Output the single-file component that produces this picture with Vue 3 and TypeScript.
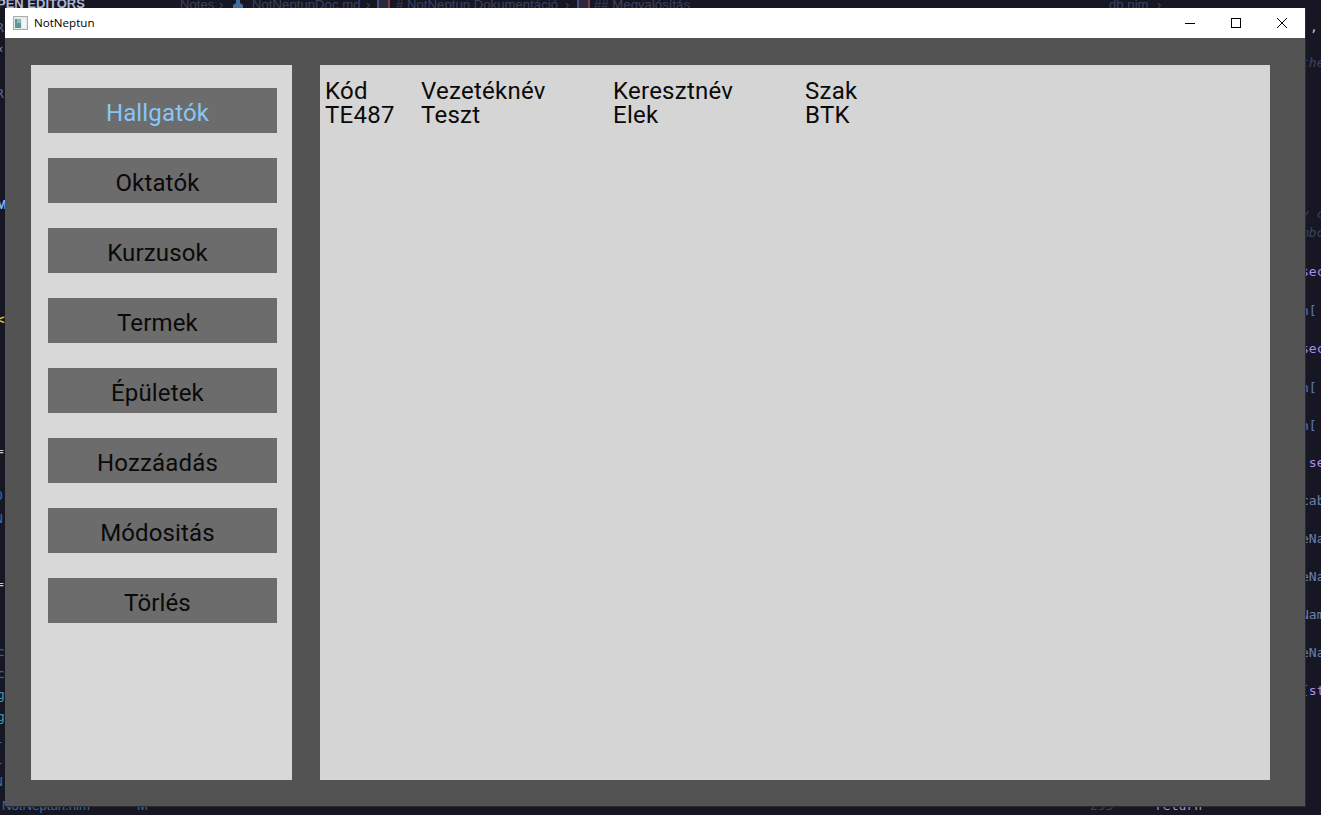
<script setup lang="ts">
interface Snip { t: string; x: number; y: number; c: string; k?: string }

const menu: string[] = ['Hallgatók', 'Oktatók', 'Kurzusok', 'Termek', 'Épületek', 'Hozzáadás', 'Módositás', 'Törlés']
const head: string[] = ['Kód', 'Vezetéknév', 'Keresztnév', 'Szak']
const row: string[] = ['TE487', 'Teszt', 'Elek', 'BTK']

const blue = '#5a78c8'
const purple = '#a98cf0'
const dim = '#3a4360'
const var1 = '#6f80a8'
const link = '#2f6db0'
const snippets: Snip[] = [
  { t: 'PEN EDITORS', x: -3, y: -5, c: '#aeb8d6', k: 'bold' },
  { t: 'Notes', x: 180, y: -4, c: dim, k: 'ui' },
  { t: '›', x: 219, y: -4, c: dim, k: 'ui' },
  { t: 'NotNeptunDoc.md', x: 252, y: -4, c: dim, k: 'ui' },
  { t: '›', x: 366, y: -4, c: dim, k: 'ui' },
  { t: '# NotNeptun Dokumentáció', x: 396, y: -4, c: dim, k: 'ui' },
  { t: '›', x: 565, y: -4, c: dim, k: 'ui' },
  { t: '## Megvalósítás', x: 594, y: -4, c: dim, k: 'ui' },
  { t: 'db.nim', x: 1109, y: -4, c: dim, k: 'ui' },
  { t: '›', x: 1157, y: -4, c: dim, k: 'ui' },
  { t: ',', x: 1310, y: 18, c: '#c8c8d8' },
  { t: 'the', x: 1301, y: 54, c: dim, k: 'italic' },
  { t: 'y c', x: 1301, y: 205, c: dim, k: 'italic' },
  { t: 'mbo', x: 1301, y: 224, c: dim, k: 'italic' },
  { t: 'sec', x: 1301, y: 263, c: purple },
  { t: 'n[', x: 1301, y: 302, c: blue },
  { t: 'sec', x: 1301, y: 340, c: purple },
  { t: 'n[', x: 1301, y: 379, c: blue },
  { t: 'n[', x: 1301, y: 417, c: blue },
  { t: ' se', x: 1301, y: 454, c: purple },
  { t: 'cab', x: 1301, y: 492, c: var1 },
  { t: 'eNa', x: 1301, y: 530, c: var1 },
  { t: 'eNa', x: 1301, y: 568, c: var1 },
  { t: 'Nam', x: 1301, y: 606, c: var1 },
  { t: 'eNa', x: 1301, y: 644, c: var1 },
  { t: '[st', x: 1301, y: 682, c: purple },
  { t: 'NotNeptun.nim', x: 2, y: 797, c: link, k: 'ui' },
  { t: 'M', x: 137, y: 797, c: link, k: 'ui' },
  { t: '295', x: 1090, y: 797, c: dim },
  { t: 'return', x: 1155, y: 797, c: purple },
  { t: 'R', x: -4, y: 19, c: '#5a6a90' },
  { t: '‹', x: -3, y: 40, c: '#8a94b0' },
  { t: 'R', x: -4, y: 85, c: '#5a6a90' },
  { t: 'M', x: -4, y: 196, c: '#8fb4f0', k: 'bold' },
  { t: '<', x: -3, y: 311, c: '#c8c83a', k: 'bold' },
  { t: '=', x: -4, y: 442, c: '#c8c8d0' },
  { t: 'O', x: -5, y: 487, c: link },
  { t: 'N', x: -5, y: 510, c: link },
  { t: '=', x: -4, y: 575, c: '#c8c8d0' },
  { t: 'c', x: -3, y: 643, c: link },
  { t: 'c', x: -3, y: 665, c: link },
  { t: 'g', x: -3, y: 686, c: '#3a9aa8' },
  { t: 'g', x: -3, y: 708, c: '#3a9aa8' },
  { t: 'l', x: -5, y: 730, c: link },
  { t: 'l', x: -5, y: 751, c: link },
  { t: 'N', x: -5, y: 773, c: link }
]
</script>

<template>
  <div class="desktop">
    <span
      v-for="s in snippets"
      :key="s.t + s.x + s.y"
      class="snip"
      :class="s.k"
      :style="{ left: s.x + 'px', top: s.y + 'px', color: s.c }"
    >{{ s.t }}</span>

    <svg class="crumb crumb-user" width="10" height="8" viewBox="0 0 10 8"><path d="M3 0H7V3L10 5V8H0V5L3 3Z" fill="#3f6f9f" /></svg>
    <span class="crumb crumb-a"></span>
    <span class="crumb crumb-b"></span>

    <div class="window">
      <header class="titlebar">
        <svg class="app-icon" width="16" height="16" viewBox="0 0 16 16">
          <rect x="0.5" y="1.5" width="14" height="13" fill="#e6e9ea" stroke="#a9adb0" />
          <rect x="2" y="4" width="6" height="9" fill="#5b9a8f" />
          <rect x="4" y="4" width="4" height="4" fill="#8fb8cf" />
          <rect x="9" y="4" width="4" height="9" fill="#f3f5f1" />
        </svg>
        <span class="title">NotNeptun</span>
        <div class="controls">
          <div class="ctl">
            <svg width="12" height="12" viewBox="0 0 12 12"><path d="M1 6.5H11" stroke="#000" fill="none" /></svg>
          </div>
          <div class="ctl">
            <svg width="12" height="12" viewBox="0 0 12 12"><rect x="1.5" y="1.5" width="9" height="9" stroke="#000" fill="none" /></svg>
          </div>
          <div class="ctl">
            <svg width="12" height="12" viewBox="0 0 12 12"><path d="M1 1L11 11M11 1L1 11" stroke="#000" fill="none" /></svg>
          </div>
        </div>
      </header>

      <main class="content">
        <nav class="side">
          <button
            v-for="(m, i) in menu"
            :key="m"
            class="btn"
            :class="{ active: i === 0 }"
            type="button"
          >{{ m }}</button>
        </nav>

        <section class="panel">
          <div class="grid">
            <span v-for="h in head" :key="h">{{ h }}</span>
            <span v-for="c in row" :key="c">{{ c }}</span>
          </div>
        </section>
      </main>
    </div>
  </div>
</template>

<style>
html, body { margin: 0; padding: 0; background: #14141f; overflow: hidden; }
</style>

<style scoped>
.desktop {
  position: relative;
  width: 1321px;
  height: 815px;
  overflow: hidden;
  background: #171723;
}
.snip {
  position: absolute;
  font-family: "DejaVu Sans Mono", monospace;
  font-size: 13px;
  line-height: 18px;
  white-space: pre;
}
.snip.ui {
  font-family: "Liberation Sans", Arial, sans-serif;
  font-size: 13.2px;
}
.snip.italic { font-style: italic; }
.snip.bold {
  font-family: "Liberation Sans", Arial, sans-serif;
  font-size: 13px;
  font-weight: 700;
}
.crumb { position: absolute; top: 0; }
.crumb-user { left: 233px; }
.crumb-a, .crumb-b {
  box-sizing: border-box;
  width: 13px;
  height: 8px;
  border-left: 2px solid #4a4f8a;
  border-right: 2px solid #7a3a4a;
  background: #2a2a3a;
}
.crumb-a { left: 377px; }
.crumb-b { left: 577px; }
.window {
  position: absolute;
  left: 5px;
  top: 8px;
  width: 1300px;
  height: 798px;
  display: flex;
  flex-direction: column;
  background: #535353;
  box-shadow: 1px 1px 0 #2a2a30;
}
.titlebar {
  height: 30px;
  flex: none;
  display: flex;
  align-items: center;
  background: #fff;
}
.app-icon { margin-left: 8px; }
.title {
  margin-left: 5px;
  margin-bottom: 2px;
  font-family: "Open Sans", "Liberation Sans", sans-serif;
  font-size: 11.6px;
  color: #000;
}
.controls { margin-left: auto; display: flex; }
.ctl {
  width: 46px;
  height: 30px;
  display: flex;
  align-items: center;
  justify-content: center;
}
.content {
  flex: 1;
  display: flex;
  gap: 28px;
  padding: 27px 35px 26px 26px;
}
.side {
  width: 261px;
  flex: none;
  box-sizing: border-box;
  padding: 23px 15px 0 17px;
  display: flex;
  flex-direction: column;
  gap: 25px;
  background: #d8d8d8;
}
.btn {
  height: 45px;
  flex: none;
  border: 0;
  margin: 0;
  padding: 4px 10px 0 0;
  background: #6c6c6c;
  font-family: Roboto, "Liberation Sans", sans-serif;
  font-size: 24px;
  line-height: 28px;
  letter-spacing: 0.15px;
  color: #0a0a0a;
  text-align: center;
}
.btn.active { color: #87c6f7; }
.panel {
  flex: 1;
  box-sizing: border-box;
  padding: 14px 5px;
  background: #d5d5d5;
}
.grid {
  display: grid;
  grid-template-columns: 96px 192px 192px 192px;
  grid-auto-rows: 24px;
  font-family: Roboto, "Liberation Sans", sans-serif;
  font-size: 24px;
  line-height: 24px;
  letter-spacing: 0.25px;
  color: #0a0a0a;
}
</style>
